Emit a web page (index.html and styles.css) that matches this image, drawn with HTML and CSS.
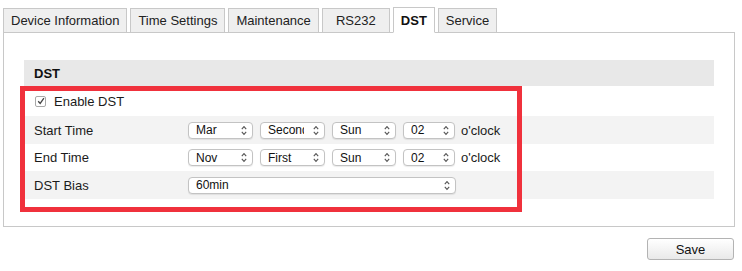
FILE: index.html
```html
<!DOCTYPE html>
<html>

<head>
    <title>DST</title>
    <link rel="stylesheet" href="styles.css">
</head>

<body>
    <div class="page">
        <ul class="tabs">
            <li class="tab">Device Information</li>
            <li class="tab">Time Settings</li>
            <li class="tab">Maintenance</li>
            <li class="tab tab-wide">RS232</li>
            <li class="tab active">DST</li>
            <li class="tab">Service</li>
        </ul>
        <div class="panel">
            <div class="section-title">DST</div>
            <div class="rows">
                <div class="row row-check">
                    <span class="checkbox">
                        <svg width="8" height="8" viewBox="0 0 8 8"><path d="M1.2 4.2 L3.2 6.4 L6.9 1.2" fill="none" stroke="#444" stroke-width="1.3"/></svg>
                    </span>
                    <span>Enable DST</span>
                </div>
                <div class="row alt">
                    <span class="label">Start Time</span>
                    <span class="select w-month"><span class="val">Mar</span><svg class="arrows" width="6" height="11" viewBox="0 0 6 11"><path d="M0.8 4.2 L3 1.6 L5.2 4.2 M0.8 6.8 L3 9.4 L5.2 6.8" fill="none" stroke="#555" stroke-width="1.1"/></svg></span>
                    <span class="select w-week"><span class="val">Second</span><svg class="arrows" width="6" height="11" viewBox="0 0 6 11"><path d="M0.8 4.2 L3 1.6 L5.2 4.2 M0.8 6.8 L3 9.4 L5.2 6.8" fill="none" stroke="#555" stroke-width="1.1"/></svg></span>
                    <span class="select w-day"><span class="val">Sun</span><svg class="arrows" width="6" height="11" viewBox="0 0 6 11"><path d="M0.8 4.2 L3 1.6 L5.2 4.2 M0.8 6.8 L3 9.4 L5.2 6.8" fill="none" stroke="#555" stroke-width="1.1"/></svg></span>
                    <span class="select w-hour"><span class="val">02</span><svg class="arrows" width="6" height="11" viewBox="0 0 6 11"><path d="M0.8 4.2 L3 1.6 L5.2 4.2 M0.8 6.8 L3 9.4 L5.2 6.8" fill="none" stroke="#555" stroke-width="1.1"/></svg></span>
                    <span class="unit">o'clock</span>
                </div>
                <div class="row">
                    <span class="label">End Time</span>
                    <span class="select w-month"><span class="val">Nov</span><svg class="arrows" width="6" height="11" viewBox="0 0 6 11"><path d="M0.8 4.2 L3 1.6 L5.2 4.2 M0.8 6.8 L3 9.4 L5.2 6.8" fill="none" stroke="#555" stroke-width="1.1"/></svg></span>
                    <span class="select w-week"><span class="val">First</span><svg class="arrows" width="6" height="11" viewBox="0 0 6 11"><path d="M0.8 4.2 L3 1.6 L5.2 4.2 M0.8 6.8 L3 9.4 L5.2 6.8" fill="none" stroke="#555" stroke-width="1.1"/></svg></span>
                    <span class="select w-day"><span class="val">Sun</span><svg class="arrows" width="6" height="11" viewBox="0 0 6 11"><path d="M0.8 4.2 L3 1.6 L5.2 4.2 M0.8 6.8 L3 9.4 L5.2 6.8" fill="none" stroke="#555" stroke-width="1.1"/></svg></span>
                    <span class="select w-hour"><span class="val">02</span><svg class="arrows" width="6" height="11" viewBox="0 0 6 11"><path d="M0.8 4.2 L3 1.6 L5.2 4.2 M0.8 6.8 L3 9.4 L5.2 6.8" fill="none" stroke="#555" stroke-width="1.1"/></svg></span>
                    <span class="unit">o'clock</span>
                </div>
                <div class="row alt">
                    <span class="label">DST Bias</span>
                    <span class="select w-bias"><span class="val">60min</span><svg class="arrows" width="6" height="11" viewBox="0 0 6 11"><path d="M0.8 4.2 L3 1.6 L5.2 4.2 M0.8 6.8 L3 9.4 L5.2 6.8" fill="none" stroke="#555" stroke-width="1.1"/></svg></span>
                </div>
                <div class="highlight"></div>
            </div>
        </div>
        <div class="actions">
            <button class="save">Save</button>
        </div>
    </div>
</body>

</html>
```

FILE: styles.css
```css
* {
    box-sizing: border-box;
}

body {
    margin: 0;
    font-family: "Liberation Sans", Arial, sans-serif;
    font-size: 13px;
    color: #1b1b1b;
    background: white;
}

.page {
    padding: 7px 7px 0 3px;
}

.tabs {
    display: flex;
    align-items: flex-end;
    gap: 3px;
    list-style: none;
    margin: 0 0 -1px 0;
    padding: 0;
    position: relative;
    z-index: 1;
}

.tab {
    height: 25px;
    padding: 0 7px;
    display: flex;
    align-items: center;
    justify-content: center;
    background: #efefef;
    border: solid 1px #c8c8c8;
    font-size: 13px;
    color: #222;
}

.tab-wide {
    min-width: 68px;
}

.tab.active {
    height: 26px;
    min-width: 42px;
    background: white;
    border-bottom-color: white;
    font-weight: bold;
    color: #111;
}

.panel {
    border: solid 1px #c8c8c8;
    padding: 27px 20px 28px 20px;
    height: 195px;
}

.section-title {
    height: 26px;
    background: #e8e8e8;
    font-weight: bold;
    padding-left: 10px;
    display: flex;
    align-items: center;
    color: #111;
}

.rows {
    position: relative;
}

.row {
    height: 27px;
    display: flex;
    align-items: center;
    padding-left: 10px;
}

.row-check {
    height: 30px;
    gap: 8px;
    padding-left: 11px;
}

.alt {
    background: #f3f3f3;
    height: 28px;
}

.row.alt:last-of-type {
    height: 27px;
}

.checkbox {
    width: 11px;
    height: 11px;
    border: solid 1px #a8a8a8;
    border-radius: 2px;
    background: white;
    display: flex;
    align-items: center;
    justify-content: center;
}

.label {
    width: 154px;
}

.select {
    height: 17px;
    display: flex;
    align-items: center;
    background: white;
    border: solid 1px #c3c3c3;
    border-radius: 4px;
    box-shadow: 0 1px 1px rgba(0, 0, 0, 0.08);
    font-size: 12px;
    color: #111;
    padding: 0 5px 0 7px;
    margin-right: 7px;
    overflow: hidden;
}

.select .val {
    flex: 1;
    white-space: nowrap;
    overflow: hidden;
}

.arrows {
    flex: none;
    margin-left: 9px;
}

.w-month {
    width: 65px;
}

.w-week {
    width: 65px;
}

.w-day {
    width: 64px;
}

.w-hour {
    width: 52px;
    margin-right: 6px;
}

.w-bias {
    width: 268px;
}

.unit {
    font-size: 13px;
}

.highlight {
    position: absolute;
    left: -4px;
    top: 0;
    width: 502px;
    height: 126px;
    border: solid 5px #f0313c;
}

.actions {
    display: flex;
    justify-content: flex-end;
    padding-top: 11px;
    padding-right: 1px;
}

.save {
    width: 87px;
    height: 22px;
    font-family: "Liberation Sans", Arial, sans-serif;
    font-size: 13px;
    color: #111;
    background: linear-gradient(#ffffff, #e9e9e9);
    border: solid 1px #b3b3b3;
    border-radius: 3px;
}
```
